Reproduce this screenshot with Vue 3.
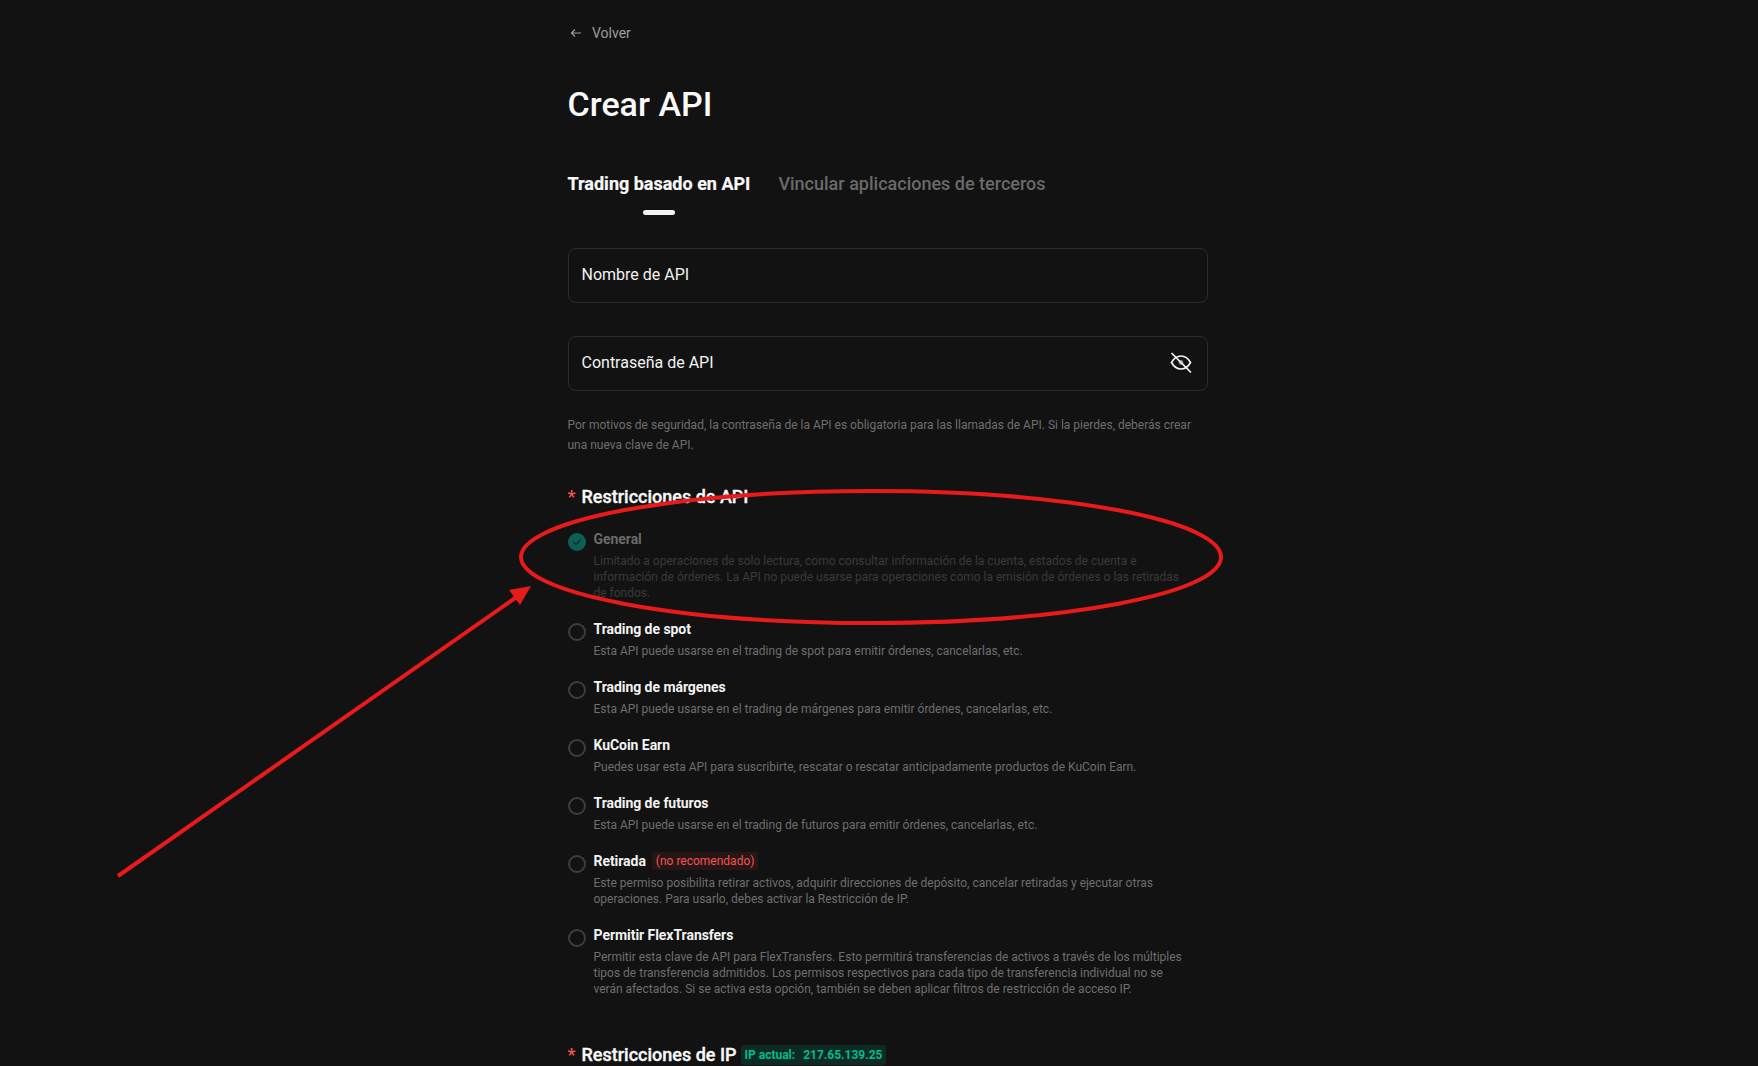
<script setup>
const options = [
  { title: 'General', checked: true, lines: ['Limitado a operaciones de solo lectura, como consultar información de la cuenta, estados de cuenta e', 'información de órdenes. La API no puede usarse para operaciones como la emisión de órdenes o las retiradas', 'de fondos.'] },
  { title: 'Trading de spot', lines: ['Esta API puede usarse en el trading de spot para emitir órdenes, cancelarlas, etc.'] },
  { title: 'Trading de márgenes', lines: ['Esta API puede usarse en el trading de márgenes para emitir órdenes, cancelarlas, etc.'] },
  { title: 'KuCoin Earn', lines: ['Puedes usar esta API para suscribirte, rescatar o rescatar anticipadamente productos de KuCoin Earn.'] },
  { title: 'Trading de futuros', lines: ['Esta API puede usarse en el trading de futuros para emitir órdenes, cancelarlas, etc.'] },
  { title: 'Retirada', tag: '(no recomendado)', lines: ['Este permiso posibilita retirar activos, adquirir direcciones de depósito, cancelar retiradas y ejecutar otras', 'operaciones. Para usarlo, debes activar la Restricción de IP.'] },
  { title: 'Permitir FlexTransfers', lines: ['Permitir esta clave de API para FlexTransfers. Esto permitirá transferencias de activos a través de los múltiples', 'tipos de transferencia admitidos. Los permisos respectivos para cada tipo de transferencia individual no se', 'verán afectados. Si se activa esta opción, también se deben aplicar filtros de restricción de acceso IP.'] },
]
</script>

<template>
  <div class="page">
    <main class="column">
      <a class="back">
        <svg width="12" height="12" viewBox="0 0 12 12" fill="none" stroke="#9c9c9c" stroke-width="1.2">
          <path d="M11 6H1.5M5 2.5 1.5 6 5 9.5" />
        </svg>
        <span>Volver</span>
      </a>
      <h1>Crear API</h1>
      <nav class="tabs">
        <div class="tab active">Trading basado en API<i></i></div>
        <div class="tab">Vincular aplicaciones de terceros</div>
      </nav>
      <div class="field">Nombre de API</div>
      <div class="field second">
        <span>Contraseña de API</span>
        <svg width="24" height="24" viewBox="0 0 24 24" fill="none" stroke="#f3f3f3" stroke-width="1.7">
          <path d="M2.5 11.5C5 7 8 5 12 5s7 2 9.5 6.5C19 16 16 18 12 18s-7-2-9.5-6.5Z" />
          <circle cx="12" cy="11.5" r="2.4" fill="#8a8a8a" stroke="none" />
          <path d="M3 2.5 21.5 21" stroke-linecap="round" />
        </svg>
      </div>
      <p class="help">Por motivos de seguridad, la contraseña de la API es obligatoria para las llamadas de API. Si la pierdes, deberás crear una nueva clave de API.</p>
      <h2 class="section"><em>*</em>Restricciones de API</h2>
      <ul class="options">
        <li v-for="o in options" :key="o.title" class="option" :class="{ dim: o.checked }">
          <span class="radio" :class="{ on: o.checked }">
            <svg v-if="o.checked" width="10" height="10" viewBox="0 0 10 10" fill="none" stroke="#1b2b28" stroke-width="1.5"><path d="M1.5 5.2 4 7.6 8.6 2.6" /></svg>
          </span>
          <div class="body">
            <div class="title">{{ o.title }}<span v-if="o.tag" class="tag">{{ o.tag }}</span></div>
            <div class="desc"><div v-for="l in o.lines" :key="l">{{ l }}</div></div>
          </div>
        </li>
      </ul>
      <h2 class="section ip"><em>*</em>Restricciones de IP<span class="ipbadge"><span>IP actual:</span><span>217.65.139.25</span></span></h2>
    </main>
    <svg class="annotation" width="1758" height="1066" viewBox="0 0 1758 1066" fill="none">
      <ellipse cx="871" cy="557" rx="350" ry="66" stroke="#e81a1a" stroke-width="4" />
      <path d="M118 876 518 596" stroke="#e81a1a" stroke-width="4" />
      <path d="M531 586 509 590 520 605Z" fill="#e81a1a" />
    </svg>
  </div>
</template>

<style>
html, body { margin: 0; background: #121212; overflow: hidden; }
</style>

<style scoped>
.page { position: relative; height: 1066px; overflow: hidden; background: #121212; font-family: Roboto, "Liberation Sans", sans-serif; color: #f3f3f3; }
.column { width: 640px; margin-left: 567.5px; padding-top: 23px; box-sizing: border-box; }
.back { display: flex; align-items: center; gap: 10px; height: 20px; font-size: 14px; color: #9c9c9c; padding-left: 2.5px; }
h1 { margin: 36px 0 0; font-size: 34px; line-height: 50px; font-weight: 500; color: #f9f9f9; }
.tabs { display: flex; gap: 28px; margin-top: 41px; }
.tab { position: relative; font-size: 18px; line-height: 28px; font-weight: 500; color: #6a6a6a; height: 40px; }
.tab.active { font-weight: 700; color: #f9f9f9; -webkit-text-stroke: 0.2px #f9f9f9; }
.tab i { position: absolute; left: 50%; bottom: -5px; width: 32px; height: 5px; margin-left: -16px; border-radius: 3px; background: #f3f3f3; }
.field { height: 55px; margin-top: 38px; padding: 0 14px 2px 13px; box-sizing: border-box; display: flex; align-items: center; justify-content: space-between; border: 1px solid #2c2c2c; border-radius: 8px; font-size: 16px; color: #f3f3f3; }
.field.second { margin-top: 33px; }
.help { margin: 24px 0 0; font-size: 12px; line-height: 20px; color: #6e6e6e; }
.section { margin: 30px 0 0; font-size: 18px; line-height: 24px; font-weight: 500; color: #f9f9f9; display: flex; align-items: center; -webkit-text-stroke: 0.35px #f9f9f9; }
.section em { width: 14px; font-style: normal; color: #f65454; -webkit-text-stroke: 0; }
.options { list-style: none; margin: 20px 0 0; padding: 0; display: flex; flex-direction: column; gap: 18px; }
.option { display: flex; gap: 8px; }
.option.dim .title { color: #6a6a6a; }
.option.dim .desc { color: #3a3a3a; }
.radio { flex: none; width: 18px; height: 18px; margin-top: 4px; border: 2px solid #3e3e3e; border-radius: 50%; box-sizing: border-box; display: flex; align-items: center; justify-content: center; }
.radio.on { border: 0; background: #0b5f55; }
.body { flex: 1; }
.title { display: flex; align-items: center; font-size: 14px; line-height: 20px; font-weight: 700; color: #f3f3f3; letter-spacing: -0.05px; }
.tag { margin-left: 6px; padding: 0 4px; height: 18px; line-height: 18px; font-size: 12px; font-weight: 400; color: #f65454; background: #271616; border-radius: 2px; letter-spacing: 0; }
.desc { margin-top: 4px; font-size: 12px; line-height: 16px; color: #6e6e6e; }
.ip { margin-top: 46px; }
.ipbadge { margin-left: 4px; height: 20px; padding: 0 4px; display: flex; align-items: center; gap: 8px; background: #0d2a24; border-radius: 2px; font-size: 12px; font-weight: 700; color: #01bc8d; -webkit-text-stroke: 0; }
.annotation { position: absolute; left: 0; top: 0; pointer-events: none; }
</style>
